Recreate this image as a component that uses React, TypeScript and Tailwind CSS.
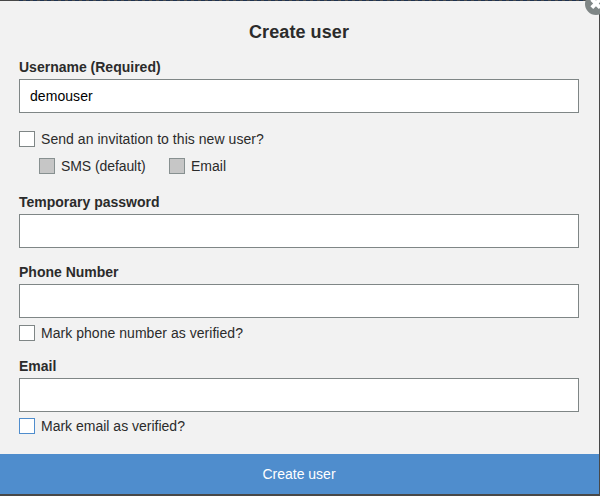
import React from "react";

type CheckProps = { label: string; disabled?: boolean; active?: boolean; className?: string };

function Check({ label, disabled, active, className = "" }: CheckProps) {
  const box = disabled
    ? "border-[#879090] bg-[#c6c6c6]"
    : active
      ? "border-[#4f8dcd] bg-white"
      : "border-[#7f8686] bg-white";
  return (
    <label className={`flex h-4 items-center gap-1.5 whitespace-nowrap ${className}`}>
      <input type="checkbox" disabled={disabled} className={`size-4 shrink-0 appearance-none border ${box}`} />
      <span className="leading-4">{label}</span>
    </label>
  );
}

function Field({ label, value, className = "" }: { label: string; value?: string; className?: string }) {
  return (
    <label className={`block ${className}`}>
      <span className="block h-5 font-bold leading-4">{label}</span>
      <input
        defaultValue={value}
        className="block h-[34px] w-full border border-[#7f8686] bg-white px-2.5 tracking-[0.06px] text-black outline-none"
      />
    </label>
  );
}

export default function App() {
  return (
    <div className="relative h-[496px] w-[600px] overflow-hidden bg-[#484848] font-['Liberation_Sans',Arial,sans-serif] text-sm text-[#2b2b2b]">
      <div className="flex h-px pl-4">
        <div className="h-px w-[570px] bg-[repeating-linear-gradient(90deg,#484848_0px,#484848_3px,#1f3350_3px,#1f3350_7px)]" />
      </div>
      <div className="flex h-[493px] w-[599px] flex-col bg-[#f2f2f2]">
        <form className="flex-1 pl-[19px] pr-5">
          <h1 className="pt-[19px] text-center text-lg font-bold leading-6 tracking-[0.08px]">Create user</h1>
          <Field label="Username (Required)" value="demouser" className="mt-[15px]" />
          <Check label="Send an invitation to this new user?" className="mt-[18px] tracking-[0.05px]" />
          <div className="ml-5 mt-[11px] flex">
            <Check label="SMS (default)" disabled className="w-[130px] tracking-[-0.08px]" />
            <Check label="Email" disabled />
          </div>
          <Field label="Temporary password" className="mt-5" />
          <Field label="Phone Number" className="mt-4" />
          <Check label="Mark phone number as verified?" className="mt-[7px] tracking-[0.04px]" />
          <Field label="Email" className="mt-[17px]" />
          <Check label="Mark email as verified?" active className="mt-1.5" />
        </form>
        <button className="h-10 w-full bg-[#4f8dcd] pr-px text-white">Create user</button>
      </div>
      <button aria-label="Close" className="absolute -top-[7px] left-[585px] size-[22px] rounded-full bg-[#7f8686]">
        <svg viewBox="0 0 22 22" className="size-[22px]" stroke="#fff" strokeWidth="4">
          <path d="M6.8 6.3l8.4 8.4M15.2 6.3l-8.4 8.4" />
        </svg>
      </button>
    </div>
  );
}
